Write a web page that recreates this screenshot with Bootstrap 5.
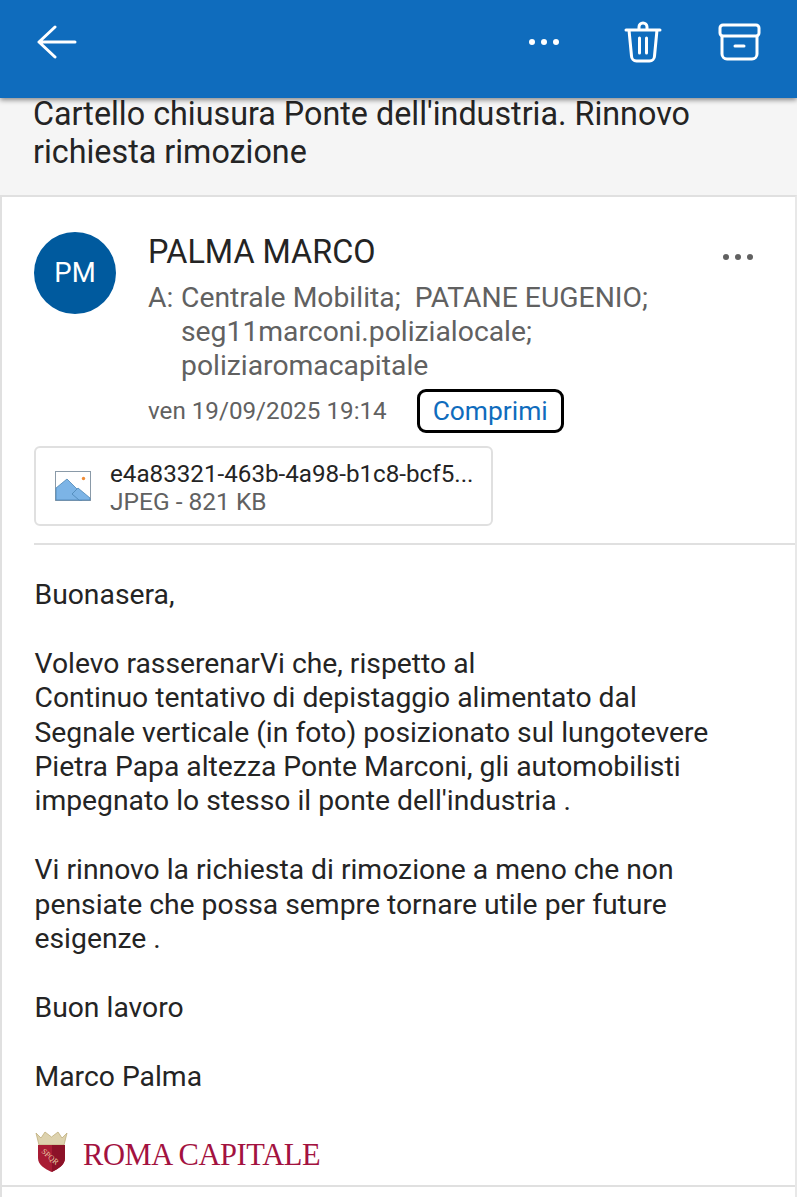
<!DOCTYPE html>
<html lang="it">
<head>
<meta charset="utf-8">
<title>Mail</title>
<link href="https://cdn.jsdelivr.net/npm/bootstrap@5.3.0/dist/css/bootstrap.min.css" rel="stylesheet">
<style>
html,body{height:1200px;overflow:hidden;background:#fff;font-family:Roboto,"Liberation Sans",sans-serif;color:#242424}
.top-bar{height:98px;background:#0f6cbd;box-shadow:0 2px 5px rgba(0,0,0,.45);position:relative;z-index:2;padding:0 36px 14px 37px}
.top-bar svg{display:block}
.top-acts{gap:56px}
.subject-zone{height:100px;background:#f5f5f5;padding:0 33px;font-size:32.3px;line-height:38px;color:#242424}
.subject-zone div{margin-top:-3px;white-space:nowrap}
.mail-sheet{border-top:2px solid #e0e0e0;border-left:2px solid #e0e0e0;border-right:2px solid #e8e8e8;height:1002px;background:#fff}
.mail-head{padding:35px 41px 0 32px}
.avatar-disc{width:82px;height:82px;border-radius:50%;background:#005a9e;color:#fff;font-size:27.5px;flex:none;margin-right:32px}
.sender-name{font-size:32.4px;line-height:40px;color:#242424}
.to-line{font-size:28.3px;line-height:34px;color:#616161;margin-top:9px;display:flex;white-space:nowrap}
.to-line span:first-child{width:33px;flex:none}
.date-row{font-size:24.2px;color:#616161;margin-top:6px;height:44px}
.collapse-tag{border:3px solid #000;border-radius:9px;color:#0f6cbd;font-size:26.4px;line-height:38px;height:44px;width:147px;margin-left:30px;text-align:center}
.file-chip{width:459px;height:80px;border:2px solid #e0e0e0;border-radius:6px;margin:13px 0 0 32px;padding:0 18px 0 19px}
.file-name{font-size:24.2px;line-height:28px;color:#242424;white-space:nowrap}
.file-meta{font-size:24.5px;line-height:28px;color:#616161}
.chip-words{padding-top:3px}
.split-line{height:2px;background:#e0e0e0;margin:17px 0 0 32px}
.mail-text{padding:33px 30px 0 32.5px;font-size:28.3px;line-height:34.4px;color:#242424;white-space:nowrap}
.mail-text p{margin:0 0 34.4px}
.logo-row{margin:36px 0 0 33px;height:44px}
.logo-word{font-family:"Liberation Serif",serif;font-size:30.5px;letter-spacing:-.4px;color:#a3123f;line-height:44px;margin:5px 0 0 15px;white-space:nowrap}
.foot-line{height:2px;background:#e0e0e0;margin-top:11px}
.mail-dots{margin-top:21px;flex:none}
.chip-pic{flex:none;margin-right:19px}
</style>
</head>
<body>
<div class="top-bar d-flex align-items-center justify-content-between">
  <svg width="40" height="34" viewBox="0 0 40 34" fill="none" stroke="#fff" stroke-width="3" stroke-linecap="round" stroke-linejoin="round"><path d="M18 2 2 17l16 15M2 17h36"/></svg>
  <div class="d-flex align-items-center top-acts">
    <svg width="32" height="8" viewBox="0 0 32 8" fill="#fff" style="margin-right:8px"><circle cx="4" cy="4" r="3"/><circle cx="16" cy="4" r="3"/><circle cx="28" cy="4" r="3"/></svg>
    <svg width="38" height="42" viewBox="0 0 38 42" fill="none" stroke="#fff" stroke-width="3" stroke-linecap="round" stroke-linejoin="round"><path d="M2 9h34M5 9l2.500 26a5 5 0 0 0 5 5h13a5 5 0 0 0 5-5L33 9M15 9V6a4 4 0 0 1 8 0v3M15.500 17v15M22.500 17v15"/></svg>
    <svg width="43" height="38" viewBox="0 0 43 38" fill="none" stroke="#fff" stroke-width="3" stroke-linecap="round" stroke-linejoin="round"><rect x="2" y="2" width="39" height="11" rx="3"/><path d="M4 13v18a5 5 0 0 0 5 5h25a5 5 0 0 0 5-5V13M17 23h9"/></svg>
  </div>
</div>
<div class="subject-zone"><div>Cartello chiusura Ponte dell'industria. Rinnovo<br>richiesta rimozione</div></div>
<div class="mail-sheet">
  <div class="mail-head d-flex">
    <div class="avatar-disc d-flex align-items-center justify-content-center">PM</div>
    <div class="flex-grow-1">
      <div class="sender-name">PALMA MARCO</div>
      <div class="to-line"><span>A:</span><span>Centrale Mobilita;&nbsp; PATANE EUGENIO;<br>seg11marconi.polizialocale;<br>poliziaromacapitale</span></div>
      <div class="date-row d-flex align-items-center"><span>ven 19/09/2025 19:14</span><span class="collapse-tag">Comprimi</span></div>
    </div>
    <svg class="mail-dots" width="32" height="8" viewBox="0 0 32 8" fill="#616161"><circle cx="4" cy="4" r="3"/><circle cx="16" cy="4" r="3"/><circle cx="28" cy="4" r="3"/></svg>
  </div>
  <div class="file-chip d-flex align-items-center">
    <svg class="chip-pic" width="36" height="30" viewBox="0 0 36 30"><rect x=".5" y=".5" width="35" height="29" fill="#fff" stroke="#8a9aa8"/><path d="M1 29V17L12 8l12 12 3 9z" fill="#7cb4e6" stroke="#4d86b5" stroke-width=".8"/><path d="M17 23l6-6 12 10v2H24z" fill="#7cb4e6" stroke="#4d86b5" stroke-width=".8"/><circle cx="28.500" cy="7.500" r="1.700" fill="#f08c36"/></svg>
    <div class="chip-words"><div class="file-name">e4a83321-463b-4a98-b1c8-bcf5...</div><div class="file-meta">JPEG - 821 KB</div></div>
  </div>
  <div class="split-line"></div>
  <div class="mail-text">
    <p>Buonasera,</p>
    <p>Volevo rasserenarVi che, rispetto al<br>Continuo tentativo di depistaggio alimentato dal<br>Segnale verticale (in foto) posizionato sul lungotevere<br>Pietra Papa altezza Ponte Marconi, gli automobilisti<br>impegnato lo stesso il ponte dell'industria .</p>
    <p>Vi rinnovo la richiesta di rimozione a meno che non<br>pensiate che possa sempre tornare utile per future<br>esigenze .</p>
    <p>Buon lavoro</p>
    <p class="mb-0">Marco Palma</p>
  </div>
  <div class="logo-row d-flex align-items-center">
    <svg width="33" height="42" viewBox="0 0 33 42" style="flex:none">
      <path d="M1 2l5 5 4-6 6.500 5L23 1l4 6 5-5-3 12H4z" fill="#ddd2ae" stroke="#bfae7c" stroke-width=".8"/>
      <path d="M3 14h27v13c0 7-7 11-13.500 14C10 38 3 34 3 27z" fill="#a81c34"/>
      <path d="M17 14h13v13c0 7-7 11-13 14z" fill="#8c1228"/>
      <text x="6" y="21" font-size="8" fill="#e8c9a0" font-family="Liberation Serif, serif" transform="rotate(42 6 21)">SPQR</text>
    </svg>
    <span class="logo-word">ROMA CAPITALE</span>
  </div>
  <div class="foot-line"></div>
</div>
</body>
</html>
